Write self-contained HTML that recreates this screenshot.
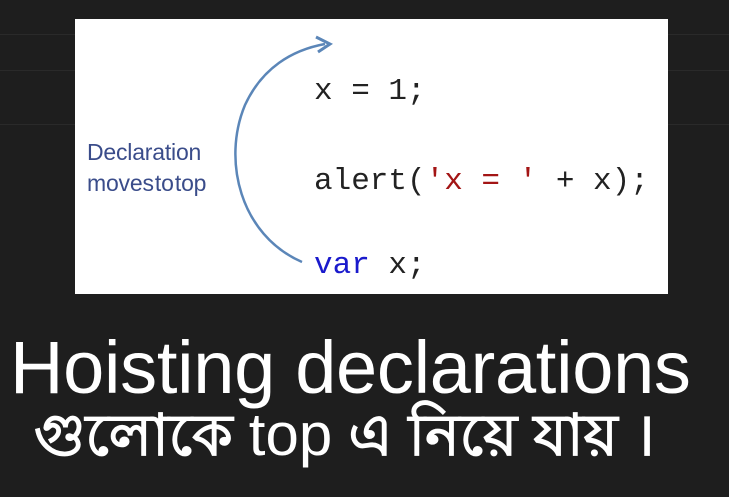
<!DOCTYPE html>
<html><head><style>
html,body{margin:0;padding:0;width:729px;height:497px;overflow:hidden;background:#1e1e1e;position:relative;font-family:"Liberation Sans",sans-serif}
.band{position:absolute;left:0;width:729px;height:1px;background:#2a2a2a}
.box{position:absolute;left:75px;top:19px;width:593px;height:275px;background:#fff}
.code{position:absolute;font-family:"Liberation Mono",monospace;font-size:31px;color:#222;white-space:pre;line-height:1}
.lbl{position:absolute;left:87px;font-size:23px;color:#3a4c8a;letter-spacing:-0.2px;word-spacing:-5px;line-height:1;white-space:nowrap}
.h1{position:absolute;left:10px;top:331px;font-size:74px;color:#fff;white-space:nowrap;line-height:1;letter-spacing:-0.3px}
.h2{position:absolute;left:34px;top:405px;font-size:58px;font-weight:bold;color:#fff;white-space:nowrap;line-height:1;font-family:"Liberation Sans","Noto Sans CJK SC",sans-serif}
.h2 b{font-weight:normal;font-size:60px}
</style></head><body>
<div class="band" style="top:34px"></div>
<div class="band" style="top:70px"></div>
<div class="band" style="top:124px"></div>
<div class="box"></div>
<svg style="position:absolute;left:0;top:0" width="729" height="300">
<path d="M302 262 C 240 235 222 160 245 105 C 262 68 292 50 325 44" fill="none" stroke="#5b86b8" stroke-width="2.5"/>
<path d="M316 37 L330 44 L318 52" fill="none" stroke="#5b86b8" stroke-width="3"/>
</svg>
<div class="code" style="left:314px;top:76px">x = 1;</div>
<div class="code" style="left:314px;top:166px">alert(<span style="color:#a31515">'x = '</span> + x);</div>
<div class="code" style="left:314px;top:250px"><span style="color:#1a1acc">var</span> x;</div>
<div class="lbl" style="top:141px">Declaration</div>
<div class="lbl" style="top:172px">moves to top</div>
<div class="h1">Hoisting declarations</div>
<div class="h2">গুলোকে <b>top</b> এ নিয়ে যায় ।</div>
</body></html>
